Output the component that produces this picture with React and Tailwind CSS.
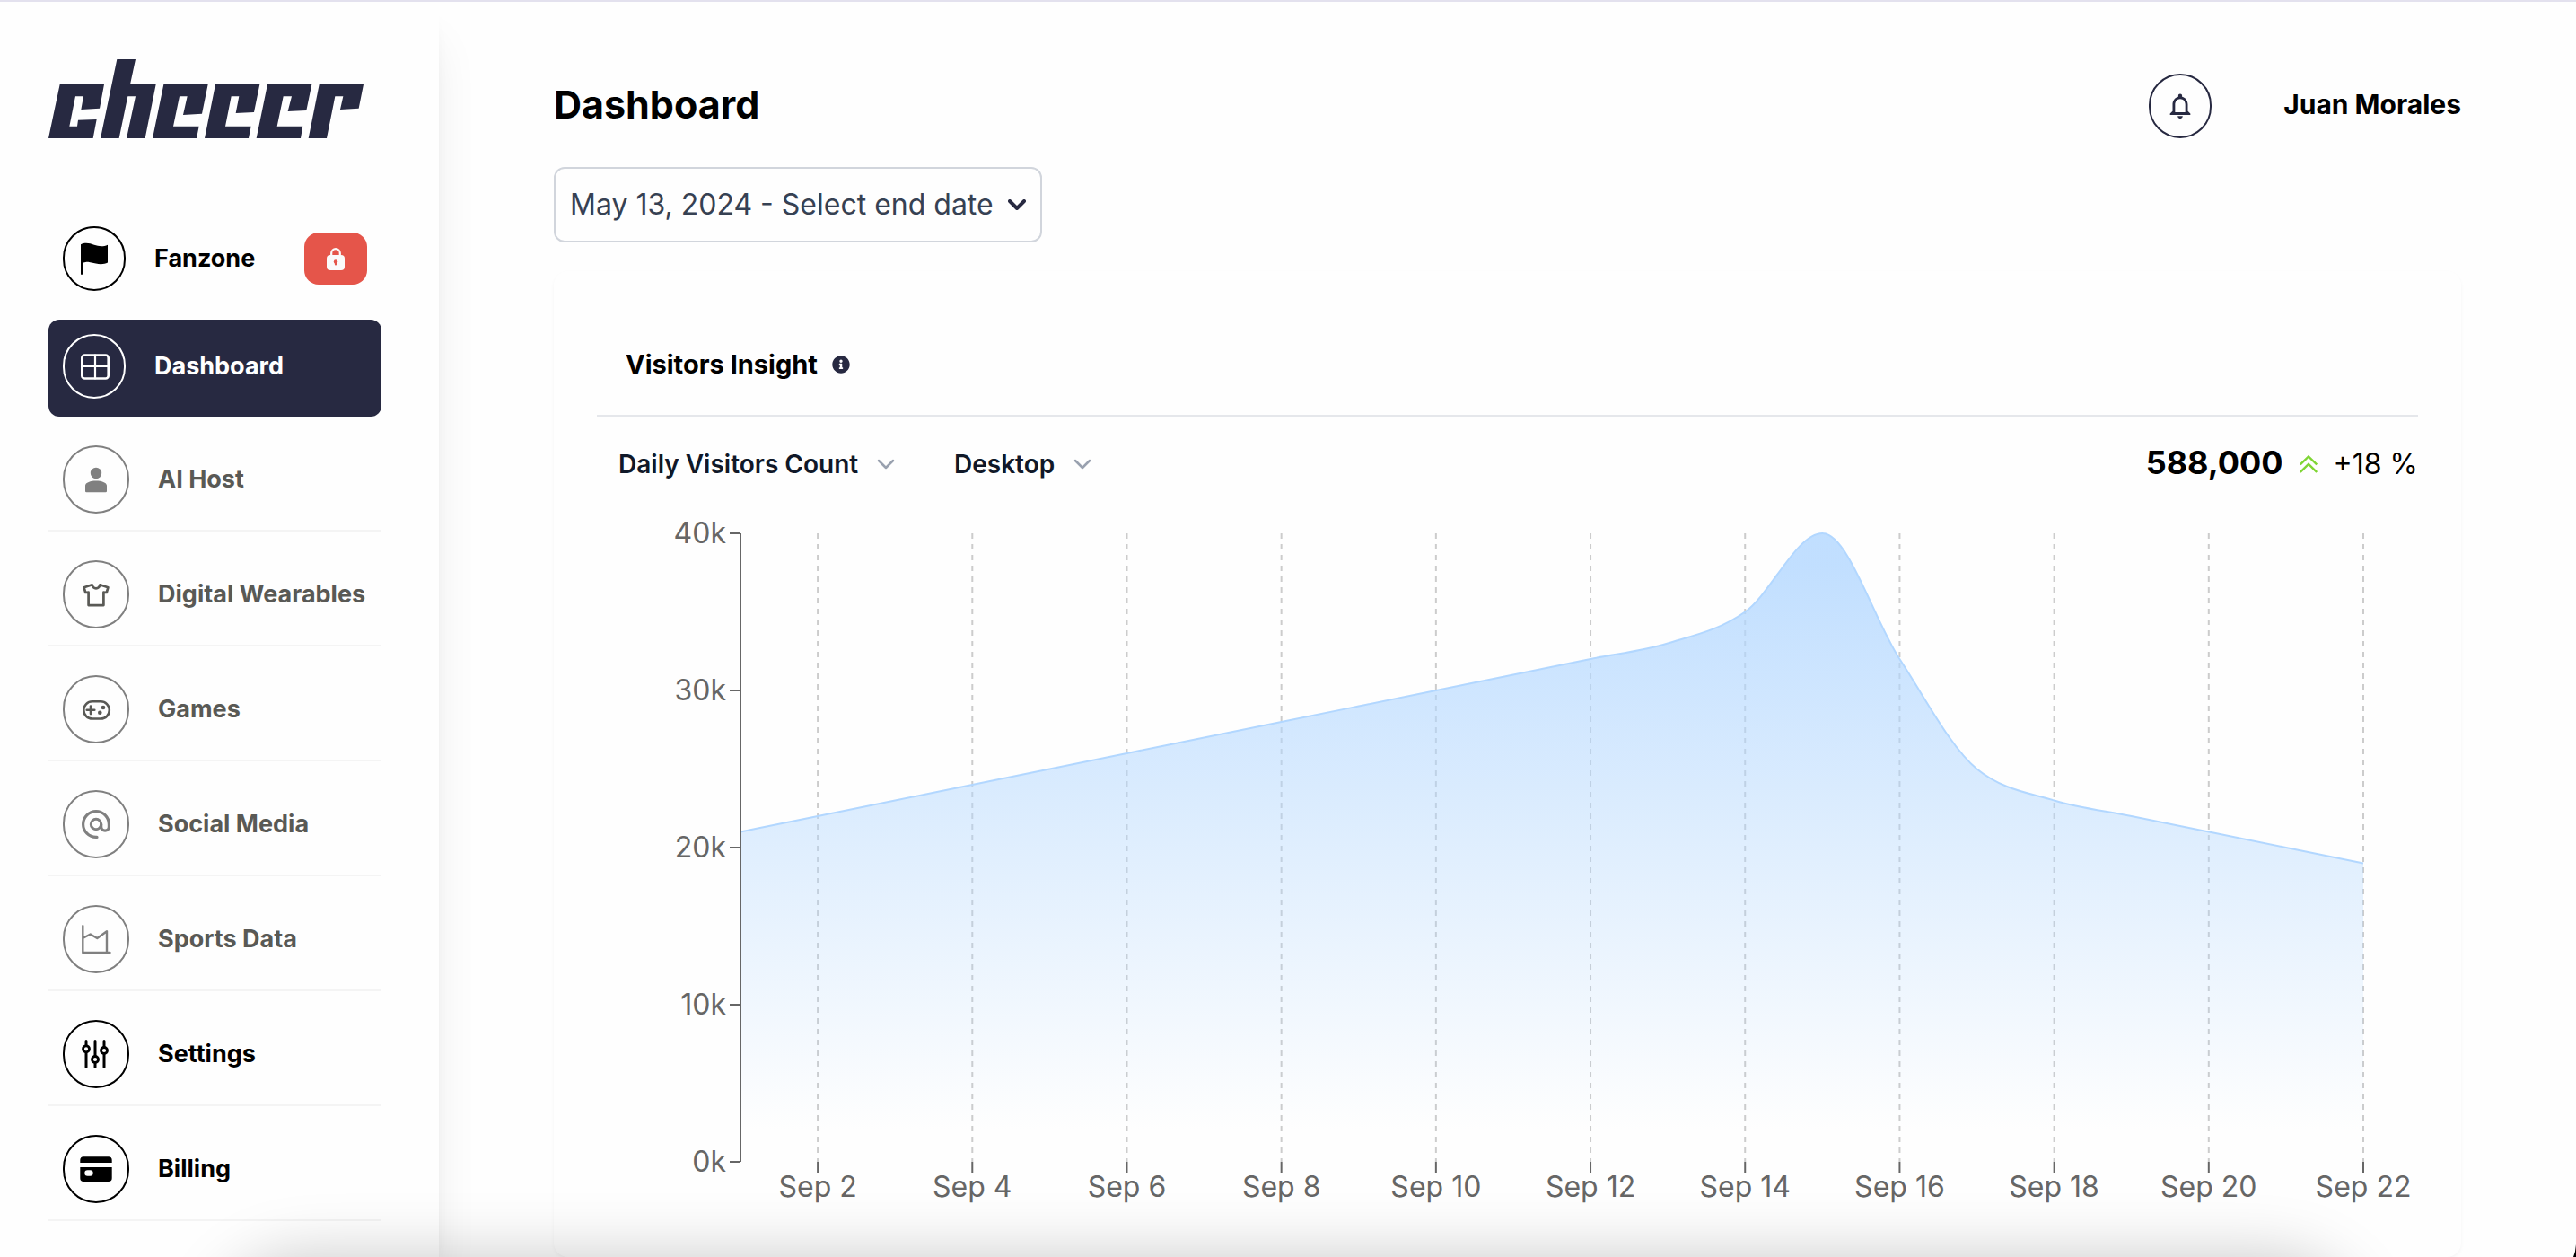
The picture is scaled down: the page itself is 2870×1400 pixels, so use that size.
import React from "react";
import { MdNotificationsNone } from "react-icons/md";
import { FaInfoCircle } from "react-icons/fa";

function Logo() {
  return (
    <svg viewBox="162 198 1053 264" className="h-[88px] w-[351px]" fill="#272941" role="img" aria-label="cheeer">
      <polygon points="200,282 348,282 333,362 271,366 279,322 252,322 232,422 258,422 261,401 323,399 311,462 162,462" />
      <polygon points="391,198 453,198 435,282 521,282 485,462 423,462 453,322 427,322 398,462 336,462" />
      <polygon points="547,282 695,282 675,380 612,384 626,322 600,322 579,422 665,422 657,462 510,462" />
      <polygon points="720,282 868,282 849,375 788,378 799,322 773,322 753,422 839,422 831,462 684,462" />
      <polygon points="894,282 1042,282 1024,369 962,372 975,322 947,322 926,422 1012,422 1005,462 857,462" />
      <polygon points="1067,282 1215,282 1199,362 1137,366 1147,322 1120,322 1092,462 1031,462" />
    </svg>
  );
}

function Icon({ children }) {
  return (
    <svg viewBox="0 0 36 36" className="size-9" fill="none" stroke="currentColor" strokeLinecap="round" strokeLinejoin="round" aria-hidden="true">
      {children}
    </svg>
  );
}

const icons = {
  flag: (
    <Icon>
      <path stroke="none" fill="currentColor" d="M3 2.3C8 -.4 13 1 18 2.8S28 5 33 2.8V22.6C28 25.2 20 24 15 22.6S9 22 6 22.6V35.7H3z" />
    </Icon>
  ),
  grid: (
    <Icon>
      <rect x="4.3" y="5.5" width="29.4" height="26" rx="3" strokeWidth="2.6" />
      <path d="M19 5.5v26M4.3 18h29.4" strokeWidth="2.2" />
    </Icon>
  ),
  user: (
    <Icon>
      <g stroke="none" fill="currentColor">
        <circle cx="18" cy="11" r="6.2" />
        <path d="M6 24.8c0-3.4 6-5.4 12-5.4s12 2 12 5.4V31a1.2 1.2 0 0 1-1.2 1.2H7.2A1.2 1.2 0 0 1 6 31z" />
      </g>
    </Icon>
  ),
  shirt: (
    <Icon>
      <path strokeWidth="2.7" className="text-[#595955]" stroke="currentColor" d="M13.6 7.3c.6 2.6 2.2 4 4.4 4s3.8-1.4 4.4-4l9 3-1.7 5.7-3.3-.4v14.5H9.6V15.6l-3.3.4-1.7-5.7z" />
    </Icon>
  ),
  gamepad: (
    <Icon>
      <g className="text-[#595955]" stroke="currentColor" strokeWidth="2.6">
        <rect x="4.3" y="9.3" width="28.5" height="19.2" rx="9.5" />
        <path d="M12 14.5v8.6M7.7 18.8h8.6" />
      </g>
      <g className="text-[#595955]" stroke="none" fill="currentColor">
        <circle cx="26" cy="16" r="2.3" />
        <circle cx="22.3" cy="21.7" r="2.3" />
      </g>
    </Icon>
  ),
  at: (
    <Icon>
      <circle cx="18" cy="18" r="5.7" strokeWidth="3" />
      <path strokeWidth="3.2" d="M19 32.4h-1A14.4 14.4 0 1 1 32.4 18v2.8a4.3 4.3 0 0 1-8.7 0V18" />
    </Icon>
  ),
  chart: (
    <Icon>
      <path strokeWidth="2.4" d="M3.3 3.3V33H33.5M3.6 16.7L11.7 12.5L19.3 17L30 9.3V33" />
    </Icon>
  ),
  sliders: (
    <Icon>
      <path strokeWidth="3" d="M7 3.5v5M7 16.5v16M17 3.5v16M17 28.5v4M27 3.5v6.5M27 18.5v14" />
      <g strokeWidth="2.8">
        <circle cx="7" cy="12.3" r="3.5" />
        <circle cx="17" cy="24" r="3.5" />
        <circle cx="27" cy="14" r="3.5" />
      </g>
    </Icon>
  ),
  card: (
    <Icon>
      <path stroke="none" fill="currentColor" fillRule="evenodd" d="M0.3 11V8a3.8 3.8 0 0 1 3.8-3.8h27.8A3.8 3.8 0 0 1 35.7 8v3zM0.3 16h35.4v12.2A3.8 3.8 0 0 1 31.9 32H4.1A3.8 3.8 0 0 1 .3 28.2zM8.5 19.3a3.2 3.2 0 0 0 0 6.4h3a3.2 3.2 0 0 0 0-6.4z" />
    </Icon>
  ),
};

function Lock() {
  return (
    <svg viewBox="0 0 20 25" className="h-[25px] w-5" aria-hidden="true">
      <path d="M5.2 9.5V5.9a4.8 4.8 0 0 1 9.6 0V9.5" fill="none" stroke="#fafafa" strokeWidth="2.2" />
      <rect y="8" width="20" height="17" rx="4" fill="#fafafa" />
      <circle cx="10" cy="15.4" r="2.2" fill="#e5554a" />
      <rect x="8.9" y="15.5" width="2.2" height="4" rx="1" fill="#e5554a" />
    </svg>
  );
}

const items = [
  { label: "AI Host", icon: "user" },
  { label: "Digital Wearables", icon: "shirt" },
  { label: "Games", icon: "gamepad" },
  { label: "Social Media", icon: "at" },
  { label: "Sports Data", icon: "chart" },
  { label: "Settings", icon: "sliders", strong: true },
  { label: "Billing", icon: "card", strong: true },
];

function Sidebar() {
  return (
    <aside className="w-[489px] shrink-0 bg-[#fefefe] pt-16 pr-16 pl-[54px] shadow-[0_40px_50px_-10px_rgb(0_0_0/0.1),0_16px_20px_-12px_rgb(0_0_0/0.1)]">
      <a href="#" className="block">
        <Logo />
      </a>
      <nav className="mt-20 text-[27px] leading-10 font-bold" aria-label="Main">
        <a href="#" className="flex items-start rounded-xl px-4 pt-[18px] pb-8 text-black">
          <span className="flex h-[72px] w-[70px] items-center justify-center rounded-full border-2 border-black">{icons.flag}</span>
          <span className="ml-8 flex-1 pt-4">Fanzone</span>
          <span className="mt-[7px] flex h-[58px] w-[70px] items-center justify-center rounded-2xl bg-[#e5554a]">
            <Lock />
          </span>
        </a>
        <a href="#" aria-current="page" className="flex items-start rounded-xl bg-[#272941] px-4 pt-4 pb-5 text-white">
          <span className="flex h-[72px] w-[70px] items-center justify-center rounded-full border-2 border-white">{icons.grid}</span>
          <span className="ml-8 pt-4">Dashboard</span>
        </a>
        {items.map((item) => (
          <a
            key={item.label}
            href="#"
            className="flex items-center border-b-2 border-[#f4f4f4] pt-8 pb-[18px] pl-4"
          >
            <span
              className={
                item.strong
                  ? "flex h-[76px] w-[74px] shrink-0 items-center justify-center rounded-full border-2 border-black text-black"
                  : "flex h-[76px] w-[74px] shrink-0 items-center justify-center rounded-full border-2 border-[#808080] text-[#808080]"
              }
            >
              {icons[item.icon]}
            </span>
            <span className={item.strong ? "ml-8 whitespace-nowrap text-black" : "ml-8 whitespace-nowrap text-[#595955]"}>{item.label}</span>
          </a>
        ))}
      </nav>
    </aside>
  );
}

function Chevron({ className, strokeWidth }) {
  return (
    <svg viewBox="0 0 20 12" className={className} fill="none" stroke="currentColor" strokeWidth={strokeWidth} strokeLinecap="round" strokeLinejoin="round" aria-hidden="true">
      <path d="M2 2l8 8l8-8" />
    </svg>
  );
}

function Picker({ label, value }) {
  return (
    <label className="flex items-center gap-5">
      <select aria-label={label} className="appearance-none bg-transparent text-[28px] leading-10 font-semibold text-gray-900" defaultValue={value}>
        <option>{value}</option>
      </select>
      <Chevron className="h-3 w-5 text-gray-400" strokeWidth="2.5" />
    </label>
  );
}

const visitors = [21, 22, 23, 24, 25, 26, 27, 28, 29, 30, 31, 32, 33, 35, 40, 32, 25, 23, 22, 21, 20, 19];
const LEFT = 160;
const RIGHT = 1968;
const TOP = 48;
const BOTTOM = 748;
const STEP = (RIGHT - LEFT) / (visitors.length - 1);
const px = (i) => LEFT + i * STEP;
const py = (v) => BOTTOM - (v / 40) * (BOTTOM - TOP);

// Monotone cubic interpolation through evenly spaced points.
function curve(values) {
  const ys = values.map(py);
  const slopes = ys.slice(1).map((y, i) => (y - ys[i]) / STEP);
  const last = ys.length - 1;
  const t = ys.map((_, i) => {
    if (i === 0 || i === last) return 0;
    const a = slopes[i - 1];
    const b = slopes[i];
    return (Math.sign(a) + Math.sign(b)) * Math.min(Math.abs(a), Math.abs(b), 0.25 * Math.abs(a + b));
  });
  t[0] = (3 * slopes[0] - t[1]) / 2;
  t[last] = (3 * slopes[last - 1] - t[last - 1]) / 2;
  const d = STEP / 3;
  let path = `M${px(0)},${ys[0]}`;
  for (let i = 0; i < last; i++) {
    path += `C${px(i) + d},${ys[i] + d * t[i]} ${px(i + 1) - d},${ys[i + 1] - d * t[i + 1]} ${px(i + 1)},${ys[i + 1]}`;
  }
  return path;
}

const line = curve(visitors);
const days = [2, 4, 6, 8, 10, 12, 14, 16, 18, 20, 22];

function VisitorsChart() {
  return (
    <svg viewBox="0 0 2029 800" className="block w-full" role="img" aria-label="Daily visitors from Sep 1 to Sep 22">
      <defs>
        <linearGradient id="visitors" x1="0" y1="0" x2="0" y2="1">
          <stop offset="5%" stopColor="#b2d7ff" stopOpacity="0.8" />
          <stop offset="95%" stopColor="#b2d7ff" stopOpacity="0" />
        </linearGradient>
      </defs>
      <g stroke="#ccc" strokeWidth="2" strokeDasharray="6 6">
        {days.map((d) => (
          <line key={d} x1={px(d - 1)} x2={px(d - 1)} y1={TOP} y2={BOTTOM} />
        ))}
      </g>
      <path d={`${line}V${BOTTOM}H${LEFT}Z`} fill="url(#visitors)" />
      <path d={line} fill="none" stroke="#b2d7ff" strokeWidth="2" />
      <g stroke="#666" strokeWidth="2">
        <line x1={LEFT} x2={LEFT} y1={TOP} y2={BOTTOM} />
        {[0, 10, 20, 30, 40].map((v) => (
          <line key={v} x1={LEFT - 12} x2={LEFT} y1={py(v)} y2={py(v)} />
        ))}
        {days.map((d) => (
          <line key={d} x1={px(d - 1)} x2={px(d - 1)} y1={BOTTOM} y2={BOTTOM + 12} />
        ))}
      </g>
      <g fill="#666" fontSize="32">
        {[0, 10, 20, 30, 40].map((v) => (
          <text key={v} x={LEFT - 16} y={py(v) + 11} textAnchor="end">{`${v}k`}</text>
        ))}
        {days.map((d) => (
          <text key={d} x={px(d - 1)} y={BOTTOM + 39} textAnchor="middle">{`Sep ${d}`}</text>
        ))}
      </g>
    </svg>
  );
}

export default function App() {
  return (
    <div className="relative flex min-h-screen overflow-hidden border-t-2 border-[#e3e1ee] bg-[#fefefe] font-['Inter',sans-serif] text-black">
      <Sidebar />
      <main className="min-w-0 flex-1 px-32 pt-20">
        <header className="flex h-[72px] items-center justify-between">
          <h1 className="pb-1 text-[43px] leading-[56px] font-bold">Dashboard</h1>
          <div className="flex items-center gap-20">
            <button type="button" aria-label="Notifications" className="flex h-[72px] w-[70px] items-center justify-center rounded-full border-2 border-[#272941] text-[#272941]">
              <MdNotificationsNone className="size-[34px]" />
            </button>
            <span className="pb-1 text-[30px] leading-10 font-bold">Juan Morales</span>
          </div>
        </header>

        <button type="button" className="mt-8 flex h-[84px] items-center gap-4 rounded-xl border-2 border-gray-300 px-4 text-[32px] leading-10 text-gray-700">
          May 13, 2024 - Select end date
          <Chevron className="h-3 w-5 text-[#272941]" strokeWidth="4" />
        </button>

        <section className="mt-8 rounded-2xl px-12 pt-20 pb-[54px] shadow-[0_2px_4px_rgb(0_0_0/0.04)]">
          <div className="flex items-center gap-4 border-b-2 border-gray-200 px-8 pb-8">
            <h2 className="text-[29px] leading-[48px] font-bold">Visitors Insight</h2>
            <button type="button" aria-label="About this chart" className="text-[#272941]">
              <FaInfoCircle className="size-5" />
            </button>
          </div>
          <div className="flex items-center justify-between pt-6 pl-6">
            <div className="flex items-center gap-[66px]">
              <Picker label="Metric" value="Daily Visitors Count" />
              <Picker label="Device" value="Desktop" />
            </div>
            <div className="flex h-[58px] items-center">
              <strong className="pb-1 text-[36px] leading-[48px] font-bold">588,000</strong>
              <svg viewBox="0 0 20 20" className="mx-[18px] size-5" fill="none" stroke="#7fd534" strokeWidth="2.4" aria-hidden="true">
                <path d="M0.8 10.5l9.2-9l9.2 9M0.8 19l9.2-9l9.2 9" />
              </svg>
              <span className="text-[32px] leading-10">+18 %</span>
            </div>
          </div>
          <VisitorsChart />
        </section>
      </main>

      <div className="pointer-events-none fixed inset-x-0 bottom-0 h-28 overflow-hidden">
        <div className="absolute top-full right-60 left-60 h-60 rounded-[100px] shadow-[0_0_70px_rgb(0_0_0/0.21)]" />
        <svg viewBox="0 0 3 14" className="absolute right-0 bottom-0 h-3.5 w-[3px]" aria-hidden="true">
          <path d="M3 0V14H0Q2.500 8 3 0z" fill="#000" />
        </svg>
      </div>
    </div>
  );
}
